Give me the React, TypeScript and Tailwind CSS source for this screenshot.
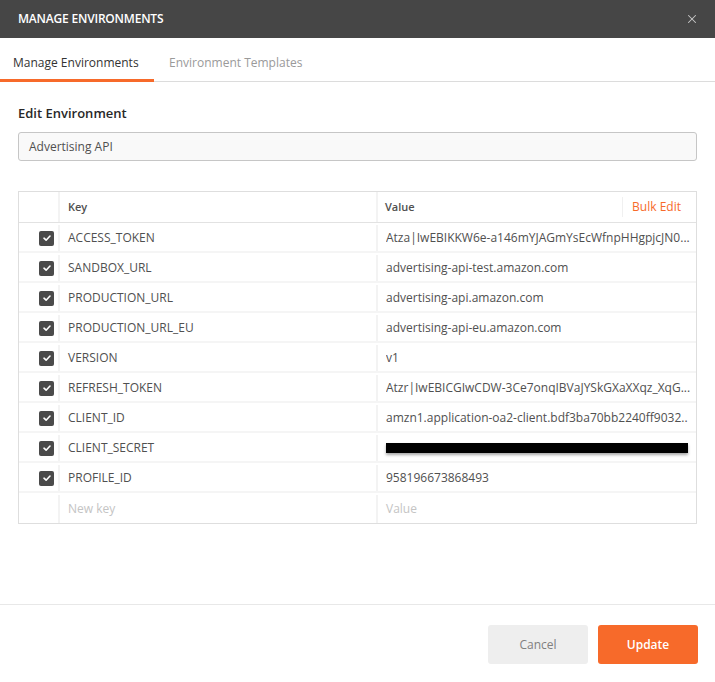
import { X } from "lucide-react";

const rows: { key: string; value: string; redacted?: boolean }[] = [
  { key: "ACCESS_TOKEN", value: "Atza|IwEBIKKW6e-a146mYJAGmYsEcWfnpHHgpjcJN0..." },
  { key: "SANDBOX_URL", value: "advertising-api-test.amazon.com" },
  { key: "PRODUCTION_URL", value: "advertising-api.amazon.com" },
  { key: "PRODUCTION_URL_EU", value: "advertising-api-eu.amazon.com" },
  { key: "VERSION", value: "v1" },
  { key: "REFRESH_TOKEN", value: "Atzr|IwEBICGIwCDW-3Ce7onqIBVaJYSkGXaXXqz_XqG..." },
  { key: "CLIENT_ID", value: "amzn1.application-oa2-client.bdf3ba70bb2240ff9032.." },
  { key: "CLIENT_SECRET", value: "", redacted: true },
  { key: "PROFILE_ID", value: "958196673868493" },
];

const Check = () => (
  <div className="w-[15px] h-[15px] rounded-[2px] bg-[#4a4a4a] flex items-center justify-center">
    <svg width="10" height="10" viewBox="0 0 10 10" fill="none">
      <path d="M2 5.2 L4.1 7.2 L8 3" stroke="white" strokeWidth="1.6" strokeLinecap="round" strokeLinejoin="round" />
    </svg>
  </div>
);

export default function App() {
  return (
    <div
      className="w-[715px] h-[682px] bg-white flex flex-col text-[#505050]"
      style={{ fontFamily: '"Open Sans", "Noto Sans", sans-serif' }}
    >
      {/* title bar */}
      <div className="h-[38px] bg-[#464646] flex items-center justify-between pl-[18px] pr-[16px] shrink-0">
        <span className="text-white text-[12px] font-semibold tracking-[-0.2px]">MANAGE ENVIRONMENTS</span>
        <X size={14} strokeWidth={1.8} className="text-[#c8c8c8]" />
      </div>

      {/* tabs */}
      <div className="h-[44px] border-b border-[#dcdcdc] flex shrink-0">
        <div className="w-[154px] border-b-[3px] border-[#f76a2a] flex items-center pl-[13px] text-[12px] text-[#333] mb-[-1px] pt-[8px]">
          Manage Environments
        </div>
        <div className="flex items-center pl-[15px] text-[12px] text-[#9a9a9a] pt-[6px]">
          Environment Templates
        </div>
      </div>

      {/* body */}
      <div className="px-[18px] flex-1">
        <div className="mt-[21px] text-[13px] font-semibold text-[#282828] leading-[20px]">Edit Environment</div>
        <div className="mt-[9px] h-[29px] rounded-[3px] border border-[#c6c6c6] bg-[#f9f9f9] flex items-center pl-[10px] text-[12px] text-[#505050]">
          Advertising API
        </div>

        {/* table */}
        <div className="mt-[30px] border border-[#dedede]">
          <div className="h-[31px] flex border-b border-[#e2e2e2] text-[11px]">
            <div className="w-[41px] border-r-2 border-[#f3f3f3]" />
            <div className="w-[318px] border-r-2 border-[#f3f3f3] flex items-center pl-[8px] font-semibold text-[#505050]">
              Key
            </div>
            <div className="flex-1 flex items-center pl-[7px] font-semibold text-[#505050]">Value</div>
            <div className="flex items-center">
              <div className="h-[20px] border-l border-[#f0f0f0] pl-[9px] pr-[15px] flex items-center text-[12px] text-[#f76a2a]">
                Bulk Edit
              </div>
            </div>
          </div>
          {rows.map((r) => (
            <div key={r.key} className="h-[30px] flex border-b-2 border-[#f5f5f5] pt-[2px] text-[12px]">
              <div className="w-[41px] border-r-2 border-[#f3f3f3] flex items-center justify-end pr-[4px]">
                <Check />
              </div>
              <div className="w-[318px] border-r-2 border-[#f3f3f3] flex items-center pl-[8px] text-[#505050]">
                {r.key}
              </div>
              <div className="flex-1 min-w-0 flex items-center pl-[8px] pr-[6px] text-[#505050]">
                {r.redacted ? (
                  <div className="w-[302px] h-[10px] bg-black shadow-[0_2px_3px_rgba(0,0,0,0.35)] mt-[-1px]" />
                ) : (
                  <span className="whitespace-nowrap overflow-hidden">{r.value}</span>
                )}
              </div>
            </div>
          ))}
          <div className="h-[30px] flex pt-[2px] text-[12px]">
            <div className="w-[41px] border-r-2 border-[#f3f3f3]" />
            <div className="w-[318px] border-r-2 border-[#f3f3f3] flex items-center pl-[8px] text-[#c4c4c4]">
              New key
            </div>
            <div className="flex-1 flex items-center pl-[8px] text-[#c4c4c4]">Value</div>
          </div>
        </div>
      </div>

      {/* footer */}
      <div className="h-[78px] border-t border-[#e8e8e8] flex items-start justify-end gap-[10px] pr-[17px] pt-[20px] shrink-0">
        <button className="w-[100px] h-[39px] rounded-[3px] bg-[#eeeeee] text-[12px] text-[#808080]">Cancel</button>
        <button className="w-[100px] h-[39px] rounded-[3px] bg-[#f76a2a] text-[12px] font-semibold text-white">Update</button>
      </div>
    </div>
  );
}
